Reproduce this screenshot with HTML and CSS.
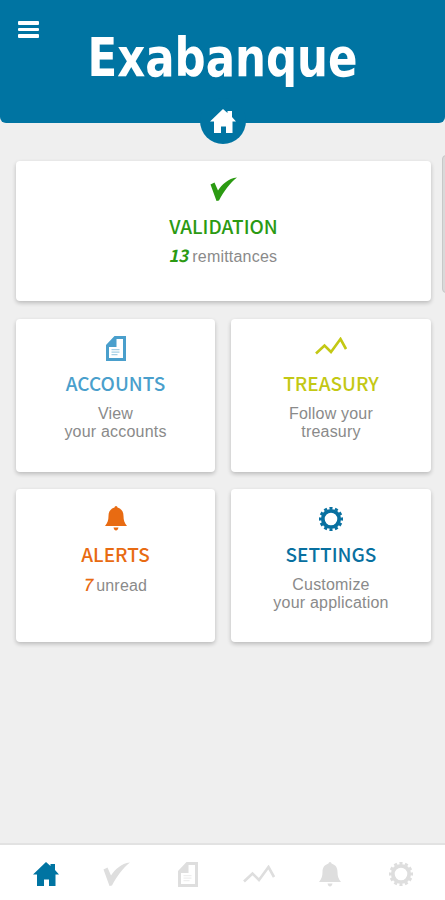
FILE: index.html
```html
<!DOCTYPE html>
<html lang="en">
<head>
    <meta charset="UTF-8">
    <meta name="viewport" content="width=device-width, initial-scale=1.0">
    <title>Exabanque</title>
    <link rel="stylesheet" href="styles.css">
</head>
<body>
    <!-- Shared icons -->
    <svg class="sprite" aria-hidden="true">
        <symbol id="home" viewBox="0 0 26 24">
            <path d="M13 0l4.500 4V2H22v6l4 4.500h-3.500V24H16v-6.500h-5V24H4V12.500H0z"/>
        </symbol>
        <symbol id="check" viewBox="0 0 27 24">
            <path d="M0.500 7.500L4.500 5.500 8 13.500C12 7.500 18 1.500 27 0.500 19.500 6.500 14 14 9 23.500L6.500 24z"/>
        </symbol>
        <symbol id="doc" viewBox="0 0 20 25">
            <path fill-rule="evenodd" d="M8.500 0H20v25H0V9zM10.500 3v8H3v11h14V3z"/>
            <path opacity="0.5" d="M5.500 13h8v1.200h-8zM5.500 15.500h8v1.200h-8zM5.500 18h6v1.200h-6z"/>
        </symbol>
        <symbol id="chart" viewBox="0 0 32 18">
            <path fill="none" stroke="currentColor" stroke-width="2.600" d="M1 16.500l8.500-8 6.500 6.500L25.500 2 31 12"/>
        </symbol>
        <symbol id="bell" viewBox="0 0 22 25">
            <path d="M9.500 1.500a1.500 1.500 0 0 1 3 0C17 3 18.500 6 18.500 10c0 4.500 1 7 3.500 10H0c2.500-3 3.500-5.500 3.500-10 0-4 1.500-7 6-8.500zM8.500 21.500h5c-.5 2-1.200 3-2.500 3s-2-1-2.500-3z"/>
        </symbol>
        <symbol id="gear" viewBox="0 0 24 24">
            <circle cx="12" cy="12" r="8.200" fill="none" stroke="currentColor" stroke-width="3.800"/>
            <circle cx="12" cy="12" r="10.800" fill="none" stroke="currentColor" stroke-width="2.400" pathLength="24" stroke-dasharray="1.100 0.900" stroke-dashoffset="0.550"/>
        </symbol>
    </svg>

    <div class="app">
        <header class="header">
            <div class="menu"><span></span><span></span><span></span></div>
            <svg class="logo" viewBox="0 0 280 60">
                <text x="2.500" y="42.500" textLength="270" lengthAdjust="spacingAndGlyphs">Exabanque</text>
            </svg>
            <div class="badge"><svg class="icon-home"><use href="#home"/></svg></div>
        </header>

        <main class="cards">
            <section class="card card-wide validation">
                <svg class="icon icon-check"><use href="#check"/></svg>
                <h2>VALIDATION</h2>
                <p><em class="bold">13</em>remittances</p>
            </section>
            <section class="card accounts">
                <svg class="icon icon-doc"><use href="#doc"/></svg>
                <h2>ACCOUNTS</h2>
                <p>View<br>your accounts</p>
            </section>
            <section class="card treasury">
                <svg class="icon icon-chart"><use href="#chart"/></svg>
                <h2>TREASURY</h2>
                <p>Follow your<br>treasury</p>
            </section>
            <section class="card alerts">
                <svg class="icon icon-bell"><use href="#bell"/></svg>
                <h2>ALERTS</h2>
                <p><em>7</em>unread</p>
            </section>
            <section class="card settings">
                <svg class="icon icon-gear"><use href="#gear"/></svg>
                <h2>SETTINGS</h2>
                <p>Customize<br>your application</p>
            </section>
        </main>

        <!-- Edge of the side panel -->
        <div class="side-panel"></div>

        <nav class="nav">
            <a class="active"><svg class="icon-home"><use href="#home"/></svg></a>
            <a><svg class="icon-check"><use href="#check"/></svg></a>
            <a><svg class="icon-doc"><use href="#doc"/></svg></a>
            <a><svg class="icon-chart"><use href="#chart"/></svg></a>
            <a><svg class="icon-bell"><use href="#bell"/></svg></a>
            <a><svg class="icon-gear"><use href="#gear"/></svg></a>
        </nav>
    </div>
</body>
</html>
```

FILE: styles.css
```css
body {
    margin: 0;
    font-family: "Liberation Sans", Arial, sans-serif;
    background-color: #efefef;
}

svg {
    display: block;
    fill: currentColor;
}

.sprite {
    position: absolute;
    width: 0;
    height: 0;
}

.app {
    position: relative;
    display: flex;
    flex-direction: column;
    height: 900px;
    overflow: hidden;
}

.header {
    position: relative;
    display: flex;
    align-items: flex-start;
    box-sizing: border-box;
    height: 123px;
    padding: 21px 18px 0;
    color: #fff;
    background-color: #0074a2;
    border-radius: 0 0 6px 6px;
}

.menu {
    display: flex;
    flex-direction: column;
    gap: 3px;
    width: 21px;
}

.menu span {
    height: 3.5px;
    border-radius: 1px;
    background-color: #fff;
}

.logo {
    flex: none;
    width: 280px;
    height: 70px;
    margin: 7px 0 0 46px;
    overflow: visible;
    font-family: "DejaVu Sans", sans-serif;
    font-size: 53px;
    font-weight: 700;
}

.badge {
    position: absolute;
    left: 200px;
    top: 98px;
    display: flex;
    align-items: center;
    justify-content: center;
    width: 46px;
    height: 46px;
    border-radius: 50%;
    background-color: #0074a2;
}

.icon-home { width: 26px; height: 24px; }
.icon-check { width: 27px; height: 24px; }
.icon-doc { width: 20px; height: 25px; }
.icon-chart { width: 32px; height: 18px; }
.icon-bell { width: 22px; height: 25px; }
.icon-gear { width: 24px; height: 24px; }

/* Cards */
.cards {
    display: grid;
    flex: 1;
    grid-template-columns: 199px 200px;
    grid-template-rows: 140px 153px 153px;
    gap: 17.5px 16px;
    padding: 38px 14px 0 16px;
}

.card {
    display: flex;
    flex-direction: column;
    align-items: center;
    box-sizing: border-box;
    padding-top: 17px;
    border-radius: 4px;
    background-color: #fff;
    box-shadow: 0 2px 4px rgba(0, 0, 0, 0.22);
    text-align: center;
}

.card-wide {
    grid-column: 1 / 3;
}

.card .icon {
    flex: none;
    margin-bottom: 7px;
}

.card .icon-check { margin-top: -1px; margin-bottom: 10px; }
.card .icon-chart { margin: 1px 0 13px; }
.card .icon-bell { margin-bottom: 8px; }
.card .icon-gear { margin-top: 1px; margin-bottom: 8px; }

.card h2 {
    margin: 0;
    font-family: "Noto Sans CJK SC", sans-serif;
    font-size: 19px;
    font-weight: 500;
    line-height: 30px;
    letter-spacing: 0;
}

.card p {
    margin: 7px 0 0;
    font-size: 16px;
    line-height: 18px;
    letter-spacing: 0.2px;
    color: #8a8a8a;
}

.card.validation p {
    margin-top: 5px;
}

.card.alerts p {
    margin-top: 6px;
}

.card em {
    display: inline-block;
    margin-right: 3px;
    transform: skewX(-12deg);
    font-family: "Noto Sans CJK SC", sans-serif;
    font-size: 17px;
    font-style: normal;
    font-weight: 500;
    line-height: 18px;
    letter-spacing: -0.3px;
}

.card em.bold {
    font-weight: 700;
}

.validation .icon, .validation h2, .validation em { color: #2b9a12; }
.accounts .icon, .accounts h2 { color: #4a9fcc; }
.treasury .icon, .treasury h2 { color: #c3c814; }
.alerts .icon, .alerts h2, .alerts em { color: #e86b12; }
.settings .icon, .settings h2 { color: #0870a0; }

.side-panel {
    position: absolute;
    left: 442px;
    top: 155px;
    width: 20px;
    height: 138px;
    border: 1px solid #c8c8c8;
    border-radius: 4px;
    box-sizing: border-box;
    background-color: #d9d9d9;
}

/* Bottom navigation */
.nav {
    display: flex;
    align-items: center;
    box-sizing: border-box;
    height: 57px;
    padding: 3px 8px 0 10px;
    border-top: 2px solid #e2e2e2;
    background-color: #fff;
    color: #dedede;
}

.nav a {
    display: flex;
    flex: 1;
    justify-content: center;
}

.nav .active {
    color: #0074a2;
}
```
